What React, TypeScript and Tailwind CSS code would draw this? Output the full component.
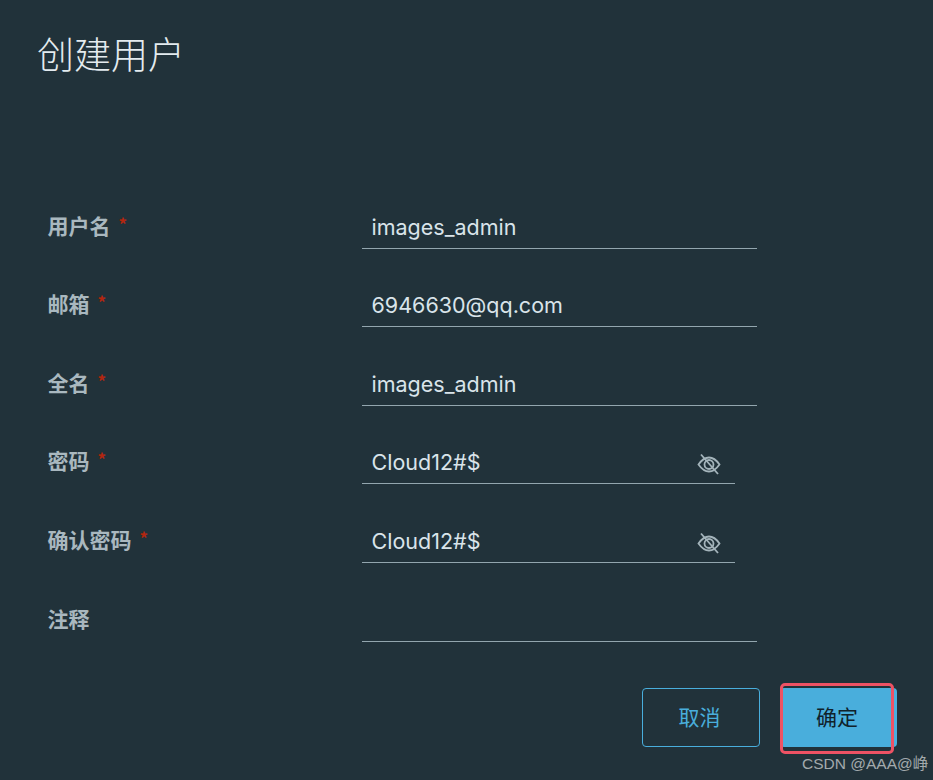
const CJK = "font-['Noto_Sans_CJK_SC','Noto_Sans',sans-serif]";

function EyeHide() {
  return (
    <svg viewBox="0 0 24 24" className="mt-[4px] h-[24px] w-[24px] text-[#a4b4bb]" fill="none" stroke="currentColor" strokeWidth="1.8">
      <path d="M1.5 12.5C5 7.5 8.5 5.5 12 5.5s7 2 10.5 7c-3.5 5-7 7-10.5 7s-7-2-10.5-7Z" />
      <circle cx="12" cy="12.5" r="4.5" />
      <path d="M4 2.500 21 22" />
    </svg>
  );
}

function Field({
  label,
  value,
  required = true,
  password = false,
}: {
  label: string;
  value?: string;
  required?: boolean;
  password?: boolean;
}) {
  return (
    <div className="flex h-[78.6px] items-start">
      <label className={`flex w-[314px] shrink-0 items-start pt-[3px] text-[21px] leading-[32px] font-bold text-[#a9b8bf] ${CJK}`}>
        {label}
        {required && <span className="ml-[8px] text-[17px] leading-[30px] font-bold text-[#b3260f]">*</span>}
      </label>
      <div
        className={`flex h-[43px] items-center justify-between border-b border-[#93a6ae] pr-[14px] pl-[10px] ${
          password ? "w-[373px]" : "w-[395px]"
        }`}
      >
        <span className="font-['Inter',sans-serif] text-[21.5px] leading-[32px] text-[#d9e4ea]">{value}</span>
        {password && <EyeHide />}
      </div>
    </div>
  );
}

export default function App() {
  return (
    <div className="relative h-[780px] w-[933px] overflow-hidden bg-[#21323a]">
      <h1 className={`pt-[26px] pl-[37px] text-[37px] leading-[54px] font-light text-[#e3ebef] ${CJK}`}>创建用户</h1>

      <form className="mt-[125.7px] pl-[47.5px]">
        <Field label="用户名" value="images_admin" />
        <Field label="邮箱" value="6946630@qq.com" />
        <Field label="全名" value="images_admin" />
        <Field label="密码" value="Cloud12#$" password />
        <Field label="确认密码" value="Cloud12#$" password />
        <Field label="注释" required={false} />
      </form>

      <div className="mt-[10.3px] flex justify-end gap-[20px] pr-[36px]">
        <button className={`h-[59px] w-[118px] rounded-[4px] border border-[#49aedc] pr-[3px] text-[21px] text-[#49aedc] ${CJK}`}>取消</button>
        <button className={`h-[59px] w-[117px] rounded-[4px] bg-[#49aedc] pr-[3px] text-[21px] text-[#10212a] ${CJK}`}>确定</button>
      </div>

      {/* red annotation drawn over the screenshot */}
      <div className="absolute top-[683px] left-[780px] h-[71px] w-[114px] rounded-[5px] border-[3.5px] border-[#ee5264]" />
      <div className="absolute top-[752px] left-[802px] font-['Liberation_Sans','Noto_Sans_CJK_SC',sans-serif] text-[15.5px] leading-[24px] text-[#a3aaad]">
        CSDN @AAA@峥
      </div>
    </div>
  );
}
